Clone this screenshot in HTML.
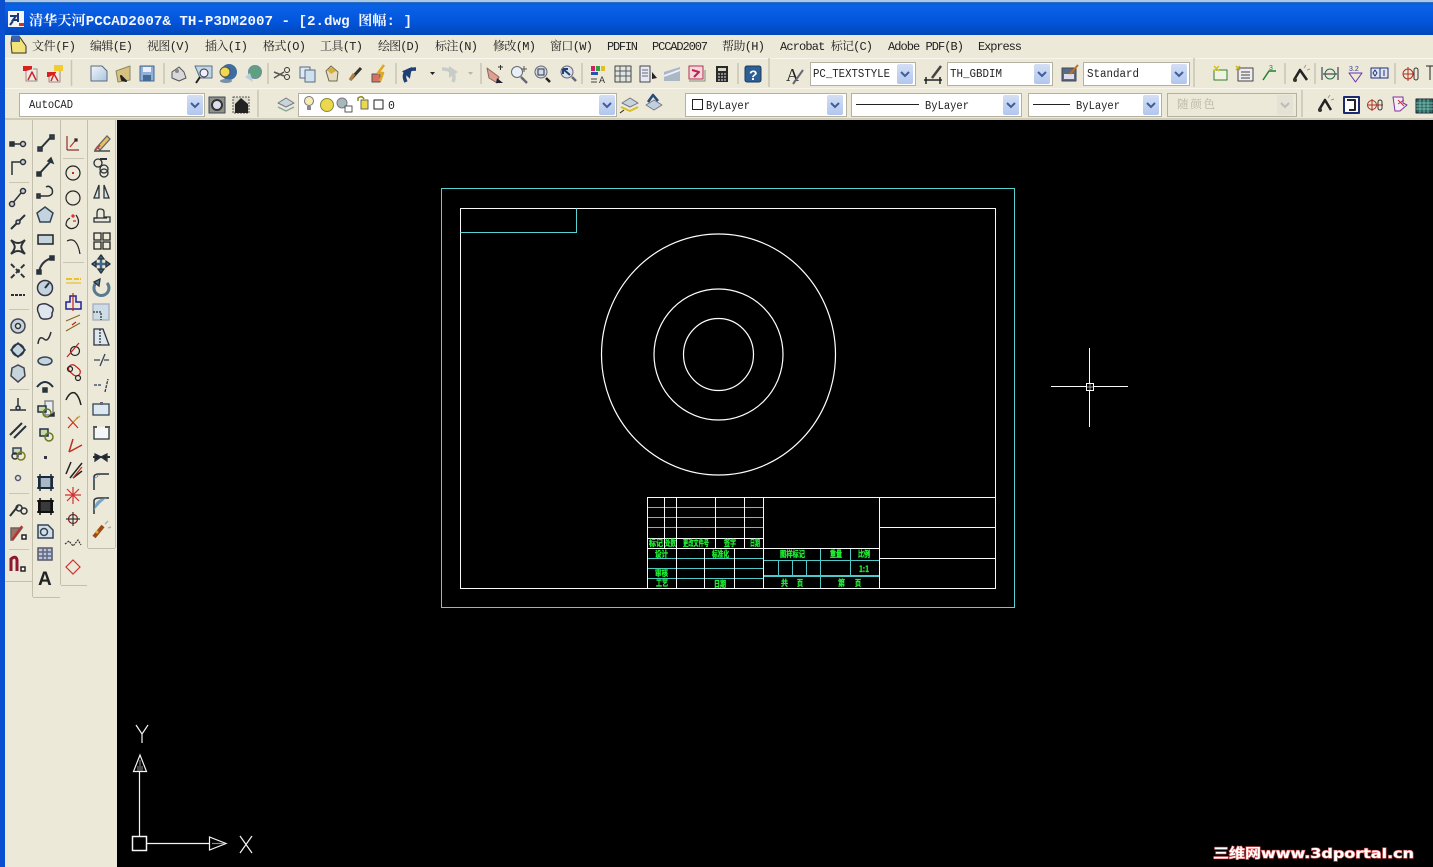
<!DOCTYPE html>
<html><head><meta charset="utf-8"><title>PCCAD</title>
<style>
html,body{margin:0;padding:0;background:#000;width:1433px;height:867px;overflow:hidden}
svg{display:block}
.m{font:12px "Liberation Mono","Noto Serif CJK SC",monospace;fill:#222}
.t{font:11.5px "Liberation Mono","Noto Serif CJK SC",monospace;fill:#222}
.g{font:bold 8.5px "Noto Sans CJK SC",sans-serif;fill:#1fee33;stroke:#1fee33;stroke-width:.35}
</style></head><body>
<svg xmlns="http://www.w3.org/2000/svg" width="1433" height="867" viewBox="0 0 1433 867">
<defs>
<linearGradient id="tb" x1="0" y1="0" x2="0" y2="1"><stop offset="0" stop-color="#0a5ad8"/><stop offset=".12" stop-color="#0a62e6"/><stop offset=".6" stop-color="#0355dc"/><stop offset="1" stop-color="#0248b8"/></linearGradient>
<linearGradient id="btn" x1="0" y1="0" x2="0" y2="1"><stop offset="0" stop-color="#d4dff5"/><stop offset="1" stop-color="#b2c6ee"/></linearGradient>
<linearGradient id="paper" x1="0" y1="0" x2="1" y2="1"><stop offset="0" stop-color="#f2f6fb"/><stop offset="1" stop-color="#a9c4dd"/></linearGradient>
<g id="arr"><rect x="-8" y="-10" width="16" height="20" rx="2" fill="url(#btn)"/><path d="M-4-2 0 2 4-2" fill="none" stroke="#3f5f9a" stroke-width="2"/></g>
</defs>

<!-- window chrome -->
<rect width="1433" height="867" fill="#ece9d8"/>
<rect width="1433" height="2" fill="#a9c6e6"/>
<rect y="2" width="1433" height="33" fill="url(#tb)"/>
<rect y="2" width="1433" height="1" fill="#2a6cc0"/>
<rect x="0" y="0" width="5" height="867" fill="#0a4fd0"/>
<rect x="117" y="120" width="1316" height="747" fill="#000"/>
<rect x="5" y="118" width="1428" height="2" fill="#cfccb9"/>

<!-- title -->
<rect x="8" y="11" width="16" height="16" fill="#f4f4f4"/>
<path d="M10 16h6l-3 4h5M18 13v9M13 21l-3 4" stroke="#1a3a7a" stroke-width="2" fill="none"/>
<rect x="19" y="23" width="5" height="3" fill="#d03020"/>
<text x="29" y="25" font-family="'Liberation Mono','Noto Serif CJK SC',monospace" font-size="13.5" font-weight="bold" fill="#f4f6ff" textLength="383" lengthAdjust="spacingAndGlyphs">清华天河PCCAD2007&amp; TH-P3DM2007 - [2.dwg 图幅: ]</text>

<!-- menu -->
<path d="M11 43 12 53H26V46L19 36H12Z" fill="#f2e27a" stroke="#30302a"/><rect x="12" y="36" width="8" height="6" fill="#3a62a8"/>
<g class="m">
<text x="32" y="50" textLength="44">文件(F)</text>
<text x="90" y="50" textLength="43">编辑(E)</text>
<text x="147" y="50" textLength="43">视图(V)</text>
<text x="205" y="50" textLength="43">插入(I)</text>
<text x="263" y="50" textLength="43">格式(O)</text>
<text x="320" y="50" textLength="43">工具(T)</text>
<text x="378" y="50" textLength="42">绘图(D)</text>
<text x="435" y="50" textLength="43">标注(N)</text>
<text x="493" y="50" textLength="43">修改(M)</text>
<text x="550" y="50" textLength="43">窗口(W)</text>
<text x="607" y="50" textLength="31">PDFIN</text>
<text x="652" y="50" textLength="56">PCCAD2007</text>
<text x="722" y="50" textLength="43">帮助(H)</text>
<text x="780" y="50" textLength="93">Acrobat 标记(C)</text>
<text x="888" y="50" textLength="76">Adobe PDF(B)</text>
<text x="978" y="50" textLength="44">Express</text>
</g>

<!-- toolbar bands -->
<rect x="5" y="58" width="1428" height="30" fill="#ece9d8"/>
<path d="M5 58.500H1433M5 88.500H1433" stroke="#f8f6ec"/>
<g stroke="#c9c6b4" stroke-width="1.500">
<path d="M71.500 60V86M164 63V84M268 63V84M396 63V84M481 63V84M582 63V84M738 63V84M769 58V87M1194 58V87M1285 63V84M1315 63V84M1395 63V84"/>
<path d="M258 90V117M1302 90V117"/>
</g>

<!-- combos row 1 -->
<g fill="#fff" stroke="#b4b1a0">
<rect x="810.500" y="62.500" width="105" height="23"/><rect x="947.500" y="62.500" width="105" height="23"/><rect x="1083.500" y="62.500" width="106" height="23"/>
<rect x="19.500" y="93.500" width="185" height="23"/><rect x="298.500" y="93.500" width="318" height="23"/><rect x="685.500" y="93.500" width="161" height="23"/><rect x="851.500" y="93.500" width="170" height="23"/><rect x="1028.500" y="93.500" width="133" height="23"/>
<rect x="1167.500" y="93.500" width="129" height="23" fill="#ece9d8"/>
</g>
<use href="#arr" x="905" y="74"/><use href="#arr" x="1042" y="74"/><use href="#arr" x="1179" y="74"/>
<use href="#arr" x="195" y="105"/><use href="#arr" x="607" y="105"/><use href="#arr" x="835" y="105"/><use href="#arr" x="1011" y="105"/><use href="#arr" x="1151" y="105"/>
<rect x="1277" y="95" width="16" height="20" fill="#e4e2d4"/><path d="M1281 103l4 4 4-4" fill="none" stroke="#bbb" stroke-width="2"/>
<g class="t">
<text x="813" y="77" textLength="77" lengthAdjust="spacingAndGlyphs">PC_TEXTSTYLE</text>
<text x="950" y="77" textLength="52" lengthAdjust="spacingAndGlyphs">TH_GBDIM</text>
<text x="1087" y="77" textLength="52" lengthAdjust="spacingAndGlyphs">Standard</text>
<text x="29" y="108" textLength="44" lengthAdjust="spacingAndGlyphs">AutoCAD</text>
<text x="706" y="109" textLength="44" lengthAdjust="spacingAndGlyphs">ByLayer</text>
<text x="925" y="109" textLength="44" lengthAdjust="spacingAndGlyphs">ByLayer</text>
<text x="1076" y="109" textLength="44" lengthAdjust="spacingAndGlyphs">ByLayer</text>
<text x="388" y="109">0</text>
<text x="1177" y="108" textLength="38" style="fill:#b5b3a6">随颜色</text>
</g>
<rect x="692.500" y="99.500" width="10" height="10" fill="#fff" stroke="#222"/>
<path d="M856 104.500H919M1033 104.500H1070" stroke="#222"/>

<!-- row 1 icons -->
<g stroke-linejoin="round">
<g><rect x="23" y="66" width="9" height="5" fill="#d92020"/><path d="M26 71V81H37V69H33" fill="#f2e8e4" stroke="#9a8a88"/><path d="M28 80 32 72 36 80" fill="none" stroke="#c82828" stroke-width="1.500"/></g>
<g><rect x="47" y="72" width="9" height="5" fill="#d92020"/><rect x="54" y="65" width="9" height="6" fill="#f2cc30"/><path d="M49 77V82H60V71" fill="#f2e8e4" stroke="#9a8a88"/><path d="M51 81 54 74 58 81" fill="none" stroke="#c82828" stroke-width="1.500"/></g>
<path d="M91 66H102L107 71V81H91Z" fill="url(#paper)" stroke="#5a6a80"/>
<path d="M116 71 130 66V80L118 82Z" fill="#d8c080" stroke="#8a8a60"/><path d="M121 76 126 81 122 80Z" stroke="#222" stroke-width="2" fill="#222"/>
<path d="M140 66H154V81H140Z" fill="#8fb0d8" stroke="#44658f"/><rect x="143" y="67" width="8" height="5" fill="#eef"/><rect x="143" y="75" width="8" height="6" fill="#456a98"/>
<path d="M172 72 179 67 184 72 186 78 179 81 172 78Z" fill="#d8d8d8" stroke="#555"/><circle cx="177" cy="71" r="2" fill="#888"/>
<path d="M195 66H212V78H200Z" fill="#c2d6e6" stroke="#55708c"/><circle cx="204" cy="73" r="4" fill="#eef" stroke="#333"/><path d="M200 77 196 83" stroke="#222" stroke-width="2"/>
<circle cx="229" cy="72" r="8" fill="#3c6ca0"/><circle cx="225" cy="72" r="5" fill="#f0d850" stroke="#554"/><ellipse cx="226" cy="81" rx="6" ry="2" fill="#7a90a8"/>
<circle cx="255" cy="72" r="6.500" fill="#5ea080" stroke="#6c8ca6"/><path d="M245 77 253 82 250 73Z" fill="#bcd0dc"/>
<path d="M274 72 284 76M274 78 284 72" stroke="#555" stroke-width="1.500"/><circle cx="287" cy="70" r="2.500" fill="none" stroke="#333"/><circle cx="287" cy="77" r="2.500" fill="none" stroke="#333"/>
<rect x="300" y="67" width="10" height="11" fill="#dfe9f3" stroke="#556a80"/><rect x="305" y="70" width="10" height="12" fill="#cfe0ee" stroke="#556a80"/>
<path d="M326 71 331 66 338 72 337 81 329 81Z" fill="#e8dcc0" stroke="#6a6a50"/><path d="M327 70 332 67 336 71 331 74Z" fill="#d2b040"/>
<path d="M350 80 361 68" stroke="#333" stroke-width="3"/><path d="M350 80 354 74" stroke="#b08040" stroke-width="3"/>
<rect x="372" y="74" width="8" height="8" fill="#d87068" stroke="#555"/><path d="M384 65 378 73H383L380 81" fill="none" stroke="#e0a820" stroke-width="2.500"/>
<path d="M406 82 C402 74 406 69 416 69" fill="none" stroke="#1f3f75" stroke-width="3.500"/><path d="M402 72 411 66 411 78Z" transform="rotate(10 406 72)" fill="#1f3f75"/>
<path d="M430 72h5l-2.500 3z" fill="#222"/>
<path d="M453 82 C456 74 452 69 442 69" fill="none" stroke="#c8ccc8" stroke-width="3.500"/><path d="M458 72 449 66 449 78Z" fill="#c8ccc8"/>
<path d="M468 72h5l-2.500 3z" fill="#b8b6a8"/>
<path d="M487 68 499 77 497 83 489 78Z" fill="#e0a090" stroke="#8a6a60"/><path d="M498 67h5M500.500 65v5" stroke="#333"/><path d="M497 78 503 83 496 83Z" fill="#223"/>
<circle cx="517" cy="72" r="5.500" fill="#e8f0f6" stroke="#667"/><path d="M521 77 527 83" stroke="#667" stroke-width="2.500"/><path d="M524 66v6M521 69h6" stroke="#555"/>
<circle cx="541" cy="72" r="6" fill="#d0dce6" stroke="#667"/><rect x="538" y="69" width="6" height="6" fill="none" stroke="#334"/><path d="M546 78 550 82" stroke="#222" stroke-width="2.500"/>
<circle cx="567" cy="72" r="6" fill="#dbe4ec" stroke="#667"/><path d="M563 69 570 75M563 69h5M563 69v5" stroke="#1f3f75" stroke-width="2" fill="none"/><path d="M572 77 576 81" stroke="#667" stroke-width="2.500"/>
<rect x="591" y="66" width="4" height="5" fill="#d02060"/><rect x="596" y="66" width="4" height="5" fill="#30a040"/><rect x="601" y="66" width="4" height="5" fill="#e0c020"/><rect x="591" y="72" width="7" height="3" fill="#3050b0"/><path d="M591 79h6M591 82h6" stroke="#444"/><text x="599" y="83" font-size="9" font-family="Liberation Sans,sans-serif" fill="#333">A</text>
<rect x="615" y="66" width="16" height="16" fill="#dfe6dc" stroke="#444"/><path d="M620 66V82M626 66V82M615 71H631M615 76H631" stroke="#556"/>
<rect x="640" y="66" width="10" height="16" fill="#e6eaf0" stroke="#445"/><path d="M642 70h6M642 73h6M642 76h6" stroke="#667"/><path d="M652 72 657 78 652 79Z" fill="#222"/>
<path d="M664 72 680 67V81L664 81Z" fill="#a9b8c4"/><path d="M664 76 680 70" stroke="#eef" stroke-width="2"/>
<rect x="689" y="66" width="14" height="13" fill="#f4d8dc" stroke="#b03050"/><path d="M692 70 699 72 694 77" stroke="#c02050" fill="none" stroke-width="2"/><path d="M689 81H705V70" stroke="#887" fill="none"/>
<rect x="716" y="66" width="12" height="16" fill="#2a2a2a"/><rect x="718" y="68" width="8" height="3" fill="#d8d8c8"/><path d="M718 74h8M718 77h8M718 80h8" stroke="#eee" stroke-dasharray="2 1"/>
<rect x="745" y="66" width="16" height="16" rx="2" fill="#2c5f94" stroke="#1c3a60"/><text x="749" y="80" font-size="14" font-weight="bold" font-family="Liberation Sans,sans-serif" fill="#fff">?</text>
<text x="786" y="81" font-size="18" font-family="Liberation Serif,serif" fill="#222">A</text><path d="M793 84 803 70" stroke="#667" stroke-width="2"/>
<path d="M924 80H942M926 77V84M940 77V84" stroke="#222" stroke-width="1.500"/><path d="M932 78 941 66" stroke="#444" stroke-width="2.500"/>
<rect x="1062" y="68" width="14" height="13" fill="#5a6c80" stroke="#445"/><rect x="1064" y="74" width="10" height="5" fill="#dde"/><path d="M1070 74 1078 65" stroke="#c07020" stroke-width="2"/>
<rect x="1214" y="70" width="13" height="10" fill="#eef4e0" stroke="#3a7a30"/><path d="M1214 66l5 5M1219 66l-5 5" stroke="#d8c020" stroke-width="1.500"/>
<rect x="1238" y="68" width="15" height="13" fill="#eee" stroke="#444"/><path d="M1241 72h9M1241 75h9M1241 78h9" stroke="#444"/><path d="M1236 66l4 4M1240 66l-4 4" stroke="#c8b020" stroke-width="1.500"/>
<path d="M1263 80 1269 71H1276" fill="none" stroke="#208030" stroke-width="1.500"/><text x="1269" y="70" font-size="7" font-family="Liberation Sans,sans-serif" fill="#208030">3</text>
<g><path d="M1294 80 1300 70 1307 80" fill="none" stroke="#222" stroke-width="2.500"/><circle cx="1295" cy="80" r="2" fill="#333"/><path d="M1304 68l2-3M1307 70l3-1" stroke="#999"/></g>
<path d="M1322 67V80M1338 67V80M1323 74H1337" stroke="#223" fill="none"/><circle cx="1330" cy="74" r="5" fill="none" stroke="#2a6a4a"/>
<path d="M1349 73H1362L1355.500 82Z" fill="none" stroke="#6a30b0"/><text x="1349" y="71" font-size="7" font-family="Liberation Sans,sans-serif" fill="#303a90">3.2</text>
<rect x="1371" y="68" width="17" height="10" fill="#dfe6f0" stroke="#22307a"/><path d="M1380 68V78" stroke="#22307a"/><path d="M1375 70l2 3-2 3-2-3zM1384 70v6" stroke="#22307a" fill="none"/>
<circle cx="1408" cy="74" r="5" fill="none" stroke="#b03020"/><path d="M1403 74H1413M1408 67V81" stroke="#b03020"/><rect x="1414" y="68" width="4" height="12" rx="2" fill="none" stroke="#333"/>
<path d="M1426 66H1433M1430 66V80" stroke="#222"/>
</g>

<!-- row 2 icons -->
<g stroke-linejoin="round">
<rect x="209" y="97" width="16" height="16" fill="#8a948a" stroke="#445"/><circle cx="217" cy="105" r="5" fill="#dde" stroke="#333" stroke-width="2"/>
<rect x="233" y="97" width="16" height="16" fill="#dcdacb" stroke="#555" stroke-dasharray="2 1"/><path d="M235 104 241 98 248 104V113H235Z" fill="#222"/>
<path d="M278 103 286 98 294 103 286 107Z" fill="#c8d4dc" stroke="#778"/><path d="M278 107 286 111 294 107" fill="none" stroke="#8a9" stroke-width="1.500"/>
<circle cx="309" cy="101" r="4.500" fill="#f4ecb0" stroke="#777"/><rect x="307" y="106" width="4" height="4" fill="#889"/>
<circle cx="327" cy="105" r="6.500" fill="#ecd84c" stroke="#8a8a40"/>
<circle cx="342" cy="103" r="5" fill="#a8b8b8" stroke="#778"/><rect x="345" y="106" width="7" height="6" fill="#fff" stroke="#555"/>
<path d="M358 101V98Q362 95 364 99" fill="none" stroke="#8a8a20" stroke-width="1.500"/><rect x="361" y="100" width="7" height="9" fill="#ecd84c" stroke="#666"/>
<rect x="374" y="100" width="9" height="9" fill="#fff" stroke="#222"/>
<path d="M622 103 630 98 638 103 630 107Z" fill="#c8d4dc" stroke="#778"/><path d="M621 107 630 111 638 107" fill="none" stroke="#d8c020" stroke-width="2"/><path d="M620 113l4-3" stroke="#222"/>
<path d="M646 105 654 100 662 105 654 110Z" fill="#c0d0dc" stroke="#778"/><path d="M648 102 653 95 658 101" fill="none" stroke="#234a78" stroke-width="2.500"/>
<path d="M1319 110 1325 100 1331 110" fill="none" stroke="#222" stroke-width="2.500"/><circle cx="1320" cy="110" r="2" fill="#333"/><path d="M1328 98l2-3M1331 100l3-1" stroke="#999"/>
<rect x="1344" y="97" width="15" height="16" fill="#fff" stroke="#1c2a70" stroke-width="2"/><path d="M1347 100H1355V110H1349" fill="none" stroke="#222" stroke-width="2"/>
<circle cx="1372" cy="105" r="4.500" fill="none" stroke="#b03020"/><path d="M1367 105H1383M1372 99V111" stroke="#b03020"/><rect x="1378" y="100" width="4" height="10" rx="2" fill="none" stroke="#333"/>
<path d="M1393 97H1403V103L1407 105 1400 111H1395Z" fill="#f4eef4" stroke="#8030a0"/><path d="M1398 104 1404 100M1398 100 1404 106" stroke="#c03040"/>
<rect x="1416" y="99" width="17" height="14" fill="#286a60" stroke="#223"/><path d="M1416 103H1433M1416 106H1433M1416 109H1433M1420 99V113M1424 99V113M1428 99V113" stroke="#8fc8c0" stroke-width=".7"/>
</g>

<!-- left toolbars -->
<g fill="#ece9d8" stroke="#d2cfbd">
<rect x="5" y="120" width="27" height="545" stroke="none"/>
<path d="M5.500 581.500H32M32.500 120V597M33 597.500H60M60.500 120V585M61 585.500H87M87.500 120V548M88 548.500H115M115.500 120V548" fill="none" stroke="#c2bfad"/>
</g>
<g stroke="#c8c5b3"><path d="M9 182.500H29M9 309.500H29M9 389.500H29M9 493.500H29M9 549.500H29M63 158.500H84M63 262.500H84"/></g>

<!-- col 1 -->
<g fill="none" stroke="#2a3238" stroke-width="1.500">
<path d="M11 144H20"/><rect x="10" y="142" width="4" height="4" fill="#2a3238"/><circle cx="23" cy="144" r="2.500" fill="#ccd"/>
<path d="M12 175V162H20"/><circle cx="23" cy="162" r="2.500" fill="#ccd"/>
<path d="M12 204 21 193"/><circle cx="12" cy="204" r="2.500" fill="#ccd"/><circle cx="23" cy="191" r="2.500" fill="#ccd"/>
<path d="M11 229 25 215" stroke-width="2"/><circle cx="18" cy="222" r="2" fill="#ccd"/>
<path d="M11 240C16 246 16 248 11 254M25 240C20 246 20 248 25 254M11 240C16 244 20 244 25 240M11 254C16 250 20 250 25 254" stroke-width="2"/>
<path d="M11 264 25 278M11 278 25 264" stroke-dasharray="5 2" stroke-width="2"/>
<path d="M11 295H25" stroke-dasharray="3 1" stroke-width="2"/>
<circle cx="18" cy="326" r="7" stroke="#445" fill="#c6d4dc"/><circle cx="18" cy="326" r="2.500" fill="#ece9d8"/>
<circle cx="18" cy="350" r="6" stroke="#445" fill="#c6d4dc"/><path d="M18 343l7 7-7 7-7-7z" stroke="#234"/>
<path d="M12 368 18 365 24 368 25 376 18 382 11 376Z" fill="#c6d4dc" stroke="#445"/>
<path d="M18 398V410M10 410H26"/><circle cx="18" cy="408" r="2" fill="#ccd"/>
<path d="M10 435 22 423M14 438 26 426" stroke-width="2"/>
<rect x="13" y="448" width="8" height="6" fill="#c8d8b8" stroke="#345"/><circle cx="15" cy="456" r="3"/><circle cx="21" cy="456" r="4" stroke="#7a7a20"/>
<circle cx="18" cy="478" r="2.500" stroke="#557"/>
<path d="M10 516 18 506" stroke-width="2"/><circle cx="19" cy="508" r="3"/><circle cx="24" cy="511" r="3"/>
<path d="M11 540V528H22L13 540Z" fill="#a07060" stroke="#666"/><path d="M12 540 22 526" stroke="#c03030" stroke-width="2"/><rect x="22" y="535" width="4" height="4" fill="#fff" stroke="#222"/>
<path d="M11 571V559Q16 555 17 560V571" stroke="#901830" stroke-width="3"/><rect x="21" y="567" width="4" height="4" fill="#fff" stroke="#222"/>
</g>
<!-- col 2 -->
<g fill="none" stroke="#2a3238" stroke-width="1.500">
<path d="M40 149 51 137" stroke-width="2"/><rect x="38" y="147" width="4" height="4" fill="#345"/><rect x="50" y="135" width="4" height="4" fill="#345"/>
<path d="M39 174 52 160" stroke-width="2"/><rect x="37" y="172" width="4" height="4" fill="#234"/><path d="M51 158 53 163 48 161Z" fill="#234"/>
<path d="M39 196H48Q54 195 52 189 49 185 46 187"/><rect x="37" y="194" width="3" height="4" fill="#345"/>
<path d="M45 207 53 213 50 222H40L37 213Z" fill="#c4d4de" stroke="#345"/>
<rect x="38" y="235" width="15" height="9" fill="#c4d4de" stroke="#222"/>
<path d="M39 272Q41 261 52 258" stroke="#334" stroke-width="2"/><rect x="37" y="270" width="4" height="4" fill="#234"/><rect x="50" y="256" width="4" height="4" fill="#234"/>
<circle cx="45" cy="288" r="7.500" fill="#c4d4de" stroke="#334"/><path d="M45 288 49 283" stroke-width="2"/>
<path d="M39 305Q45 302 50 306 55 308 52 313 53 319 46 319 40 320 39 314 36 309 39 305Z" fill="#dfe6ec" stroke="#334"/>
<path d="M38 344Q39 335 44 339 48 343 51 332"/>
<ellipse cx="45" cy="361" rx="7" ry="4" fill="#c4d4de" stroke="#345"/>
<path d="M37 387Q45 377 53 387" stroke-width="2" stroke="#234"/><rect x="43" y="388" width="4" height="4" fill="#234"/>
<rect x="45" y="401" width="8" height="14" fill="#e6ecf2" stroke="#888"/><rect x="38" y="406" width="8" height="6" fill="#c8d8a8" stroke="#234"/><circle cx="47" cy="413" r="4" stroke="#687a20"/><path d="M50 416h4v-3z" fill="#111"/>
<rect x="40" y="429" width="8" height="7" fill="#c8d8a8" stroke="#234"/><circle cx="49" cy="437" r="4" stroke="#687a20"/>
<rect x="44" y="456" width="3" height="3" fill="#334" stroke="none"/>
<rect x="39" y="477" width="13" height="11" fill="#a8b8c6" stroke="#1a2a3a" stroke-width="2"/><path d="M37 477H54M37 488H54M40 474V491M51 474V491" stroke="#1a2a3a"/>
<rect x="39" y="501" width="13" height="11" fill="#3a3a3a" stroke="#111" stroke-width="2"/><path d="M37 501H54M37 512H54M40 498V515M51 498V515" stroke="#111"/>
<path d="M38 525H48L53 530V538H38Z" fill="#d2dee8" stroke="#345"/><circle cx="44" cy="532" r="3.500" stroke="#345"/>
<rect x="38" y="548" width="14" height="12" fill="#b8c8e4" stroke="#556"/><path d="M38 552H52M38 556H52M43 548V560M47 548V560" stroke="#667"/>
</g>
<text x="38" y="585" font-family="Liberation Sans,sans-serif" font-size="19" font-weight="bold" fill="#222">A</text>
<!-- col 3 -->
<g fill="none" stroke="#222" stroke-width="1.200">
<path d="M67 150V136M67 150H79" stroke="#8a3030"/><path d="M70 147 75 141" stroke="#c03030"/><rect x="75" y="139" width="2" height="2" fill="#d02020"/>
<circle cx="73" cy="173" r="7"/><rect x="72" y="172" width="2" height="2" fill="#d02020" stroke="none"/>
<circle cx="73" cy="198" r="7"/><path d="M66 198h.1M80 198h.1M73 191v.1M73 205v.1" stroke="#e02020" stroke-width="2"/>
<path d="M76 215Q81 222 76 227 70 231 66 225 66 220 70 218" /><circle cx="73" cy="216" r="1" stroke="#d02020"/><path d="M73 221h3" stroke="#d02020"/>
<path d="M67 241Q77 236 80 254"/>
<path d="M66 279H81" stroke="#e8c030" stroke-width="2" stroke-dasharray="6 1"/><path d="M73 272V284" stroke="#efe8c0" stroke-width="2"/><path d="M66 283H81" stroke="#e8c030"/>
<path d="M70 296H76V302H81V309H66V302H70Z" stroke="#20209a" stroke-width="1.500"/><path d="M73 293V311" stroke="#c02020"/>
<path d="M66 321 80 315M66 331 80 323" stroke="#8a6a20"/><path d="M72 325 76 322" stroke="#c02020"/>
<circle cx="75" cy="351" r="4.500"/><path d="M67 357 79 343" stroke="#c02020"/>
<rect x="68" y="366" width="13" height="8" rx="4" transform="rotate(40 74 370)" stroke="#c02020"/><circle cx="70" cy="369" r="2.500"/><circle cx="78" cy="378" r="2.500"/>
<path d="M66 400Q70 391 75 393 79 396 81 405" stroke-width="1.500"/>
<path d="M68 417 78 428M78 417 68 428" stroke="#c03020"/><path d="M73 422 80 416" stroke="#caa040"/>
<path d="M69 452 73 439M69 452 82 445" stroke="#c03020" stroke-width="1.500"/>
<path d="M66 474 71 462M70 478 82 463M73 478 82 471" stroke-width="1.500"/><path d="M73 478 82 467" stroke="#c03020"/>
<path d="M73 487V504M65 495H81M67 489 79 501M79 489 67 501" stroke="#d03030"/>
<circle cx="73" cy="519" r="4.500" stroke="#802020"/><path d="M73 512V526M66 519H80" stroke="#333"/>
<path d="M65 544 69 541 73 546 78 540 81 545" stroke="#333" stroke-dasharray="2 1"/>
<path d="M73 560l7 7-7 7-7-7z" stroke="#d03030"/>
</g>
<!-- col 4 -->
<g fill="none" stroke="#2a3238" stroke-width="1.300">
<path d="M97 147 107 136 110 139 100 150Z" fill="#e8c060" stroke="#666"/><path d="M94 151H110"/><path d="M95 150 100 145" stroke="#c04050" stroke-width="2"/>
<circle cx="98" cy="163" r="4"/><circle cx="104" cy="169" r="4"/><circle cx="104" cy="173" r="4"/><path d="M100 159H107" stroke-width="2"/>
<path d="M99 185 94 198H99ZM104 185 109 198H104Z" fill="#d8e4ea"/>
<path d="M94 222H110V217H104V212Q104 209 100 209 97 209 97 213V218H94Z"/><path d="M94 218H107" />
<path d="M94 233h7v7h-7zM103 233h7v7h-7zM94 242h7v7h-7zM103 242h7v7h-7z" stroke="#222"/>
<path d="M101 255V273M92 264H110" stroke="#40688a" stroke-width="2.500"/><path d="M101 255l-3 4h6zM101 273l-3-4h6zM92 264l4-3v6zM110 264l-4-3v6z" fill="#40688a"/>
<path d="M107 283A7.500 7.500 0 1 1 97 282" stroke="#5a7a90" stroke-width="3"/><path d="M94 282 100 279 99 286Z" fill="#5a7a90"/>
<rect x="93" y="304" width="16" height="16" fill="#ccdde8" stroke="#aab"/><path d="M93 312H101V320" stroke="#333" stroke-dasharray="2 1"/>
<path d="M94 329V345H109L103 329Z" fill="#dde6ec" stroke="#334"/><path d="M100 329V345" stroke-dasharray="2 1"/>
<path d="M94 360H100M104 360H109M100 366 105 354" stroke="#345"/>
<path d="M94 385H101M105 392 108 379" stroke="#2a3a60" stroke-dasharray="3 1"/>
<rect x="93" y="404" width="16" height="11" fill="#dde8f0" stroke="#345"/><rect x="100" y="402" width="3" height="3" fill="#667" stroke="none"/>
<path d="M94 427V439H109V427" fill="#f4f6f8"/><path d="M93 427H97M105 427H110" stroke="#555" stroke-width="2"/>
<path d="M93 457H110" stroke-width="2"/><path d="M95 454 101 457 95 461ZM107 454 101 457 107 461Z" fill="#223"/>
<path d="M94 490V477Q94 474 99 474H109" stroke-width="1.500"/><path d="M94 479 100 474" stroke-dasharray="1 1" stroke="#569"/>
<path d="M94 514V501Q94 498 99 498H109" stroke-width="1.500"/><path d="M95 508Q96 500 104 499 99 503 95 508Z" fill="#79a4c4" stroke="#79a4c4"/>
<path d="M94 537 103 526" stroke="#a04818" stroke-width="4"/><circle cx="97" cy="532" r="1.500" fill="#e0b020" stroke="none"/><path d="M105 524l3-3M108 528l3-1" stroke="#aaa"/>
</g>

<!-- drawing -->
<g fill="none" shape-rendering="crispEdges">
<rect x="441.500" y="188.500" width="573" height="419" stroke="#56d2d2"/>
<rect x="460.500" y="208.500" width="535" height="380" stroke="#f8f8f8"/>
<path d="M460.500 232.500H576.500V208.500" stroke="#56d2d2"/>
</g>
<g fill="none" stroke="#fff" stroke-width="1.200">
<ellipse cx="718.500" cy="354.500" rx="117" ry="120.500"/>
<ellipse cx="718.500" cy="354.500" rx="64.500" ry="65.500"/>
<ellipse cx="718.500" cy="354.500" rx="35" ry="36"/>
</g>
<g fill="none" shape-rendering="crispEdges">
<g stroke="#4fc8c8">
<path d="M647 507.500H763M647 517.500H763M647 527.500H763M647 558.500H763M647 568.500H763M647 578.500H763"/>
<path d="M763 560.500H879M778.500 560V576M792.500 560V576M806.500 560V576M820.500 548V588M850.500 548V576"/>
<path d="M763 576H879" stroke-width="2"/>
</g>
<g stroke="#f8f8f8">
<path d="M647 497.500H995M647.500 497V588M664.500 497V548M676.500 497V588M715.500 497V548M744.500 497V548M763.500 497V588M879.500 497V588"/>
<path d="M647 538.500H763M647 548.500H879M879 527.500H995M879 558.500H995M704.500 548V588M734.500 548V588"/>
</g>
</g>
<g class="g">
<text x="649" y="546" textLength="14" lengthAdjust="spacingAndGlyphs">标记</text>
<text x="665" y="546" textLength="11" lengthAdjust="spacingAndGlyphs">处数</text>
<text x="683" y="546" textLength="26" lengthAdjust="spacingAndGlyphs">更改文件号</text>
<text x="724" y="546" textLength="12" lengthAdjust="spacingAndGlyphs">签字</text>
<text x="750" y="546" textLength="10" lengthAdjust="spacingAndGlyphs">日期</text>
<text x="655" y="557" textLength="13" lengthAdjust="spacingAndGlyphs">设计</text>
<text x="712" y="557" textLength="17" lengthAdjust="spacingAndGlyphs">标准化</text>
<text x="780" y="557" textLength="25" lengthAdjust="spacingAndGlyphs">图样标记</text>
<text x="830" y="557" textLength="12" lengthAdjust="spacingAndGlyphs">重量</text>
<text x="858" y="557" textLength="12" lengthAdjust="spacingAndGlyphs">比例</text>
<text x="655" y="576" textLength="13" lengthAdjust="spacingAndGlyphs">审核</text>
<text x="656" y="586" textLength="12" lengthAdjust="spacingAndGlyphs">工艺</text>
<text x="714" y="587" textLength="12" lengthAdjust="spacingAndGlyphs">日期</text>
<text x="859" y="572" textLength="10" lengthAdjust="spacingAndGlyphs">1:1</text>
<text x="781" y="586" textLength="7" lengthAdjust="spacingAndGlyphs">共</text>
<text x="797" y="586" textLength="6" lengthAdjust="spacingAndGlyphs">页</text>
<text x="838" y="586" textLength="7" lengthAdjust="spacingAndGlyphs">第</text>
<text x="855" y="586" textLength="6" lengthAdjust="spacingAndGlyphs">页</text>
</g>

<!-- crosshair -->
<g shape-rendering="crispEdges" fill="none" stroke="#f8f8f8">
<path d="M1051 386.500H1128M1089.500 348V427"/>
<rect x="1086.500" y="383.500" width="7" height="7" fill="#000"/>
<path d="M1090 384V390M1087 387H1093" stroke="#999"/>
</g>

<!-- UCS -->
<g fill="none" stroke="#f4f4f4" stroke-width="1.200">
<rect x="132.500" y="836.500" width="14" height="14" stroke-width="1.500"/>
<path d="M139.500 836V771M147 843.500H210"/>
<path d="M133.500 771.500H146.500L140 755Z"/><path d="M140 760V771M138 766V771M142 766V771" stroke="#777"/>
<path d="M209.500 837V850L226 843.500Z"/><path d="M212 843.500H224" stroke="#888"/>
<path d="M136 725 142 734 148 725M142 734V743"/>
<path d="M240 836 252 853M252 836 240 853"/>
</g>

<!-- watermark -->
<text x="1213" y="858" font-family="'DejaVu Sans','Noto Sans CJK SC',sans-serif" font-size="13.5" font-weight="bold" fill="#fff" stroke="#e05858" stroke-width="1.200" paint-order="stroke" textLength="201" lengthAdjust="spacingAndGlyphs">三维网www.3dportal.cn</text>
</svg>
</body></html>
